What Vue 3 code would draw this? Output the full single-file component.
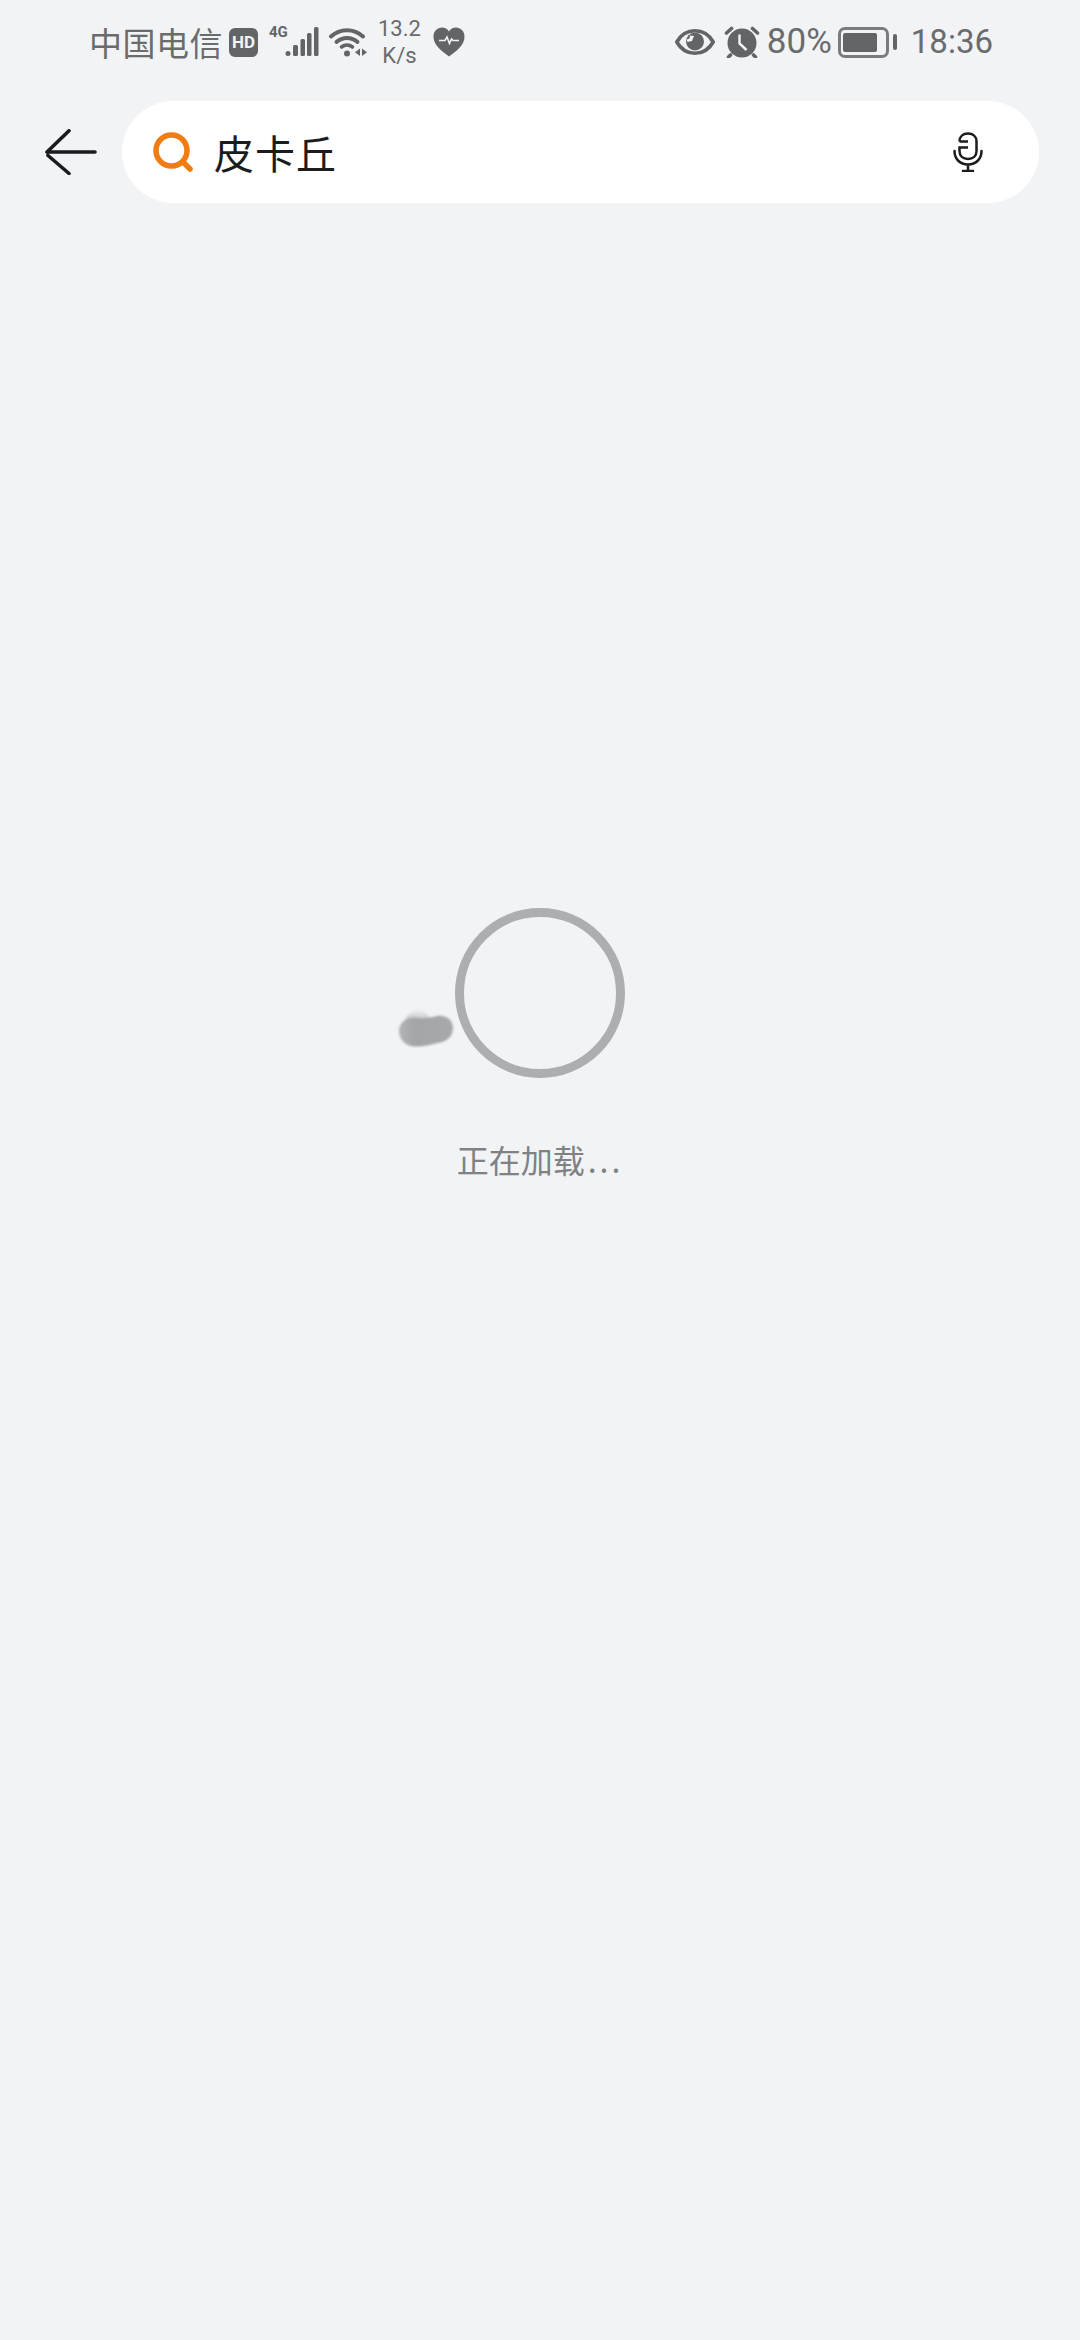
<template>
  <div class="page">
    <div class="status-bar">
      <div class="status-left">
        <span class="carrier">中国电信</span>
        <span class="hd">HD</span>
        <div class="signal">
          <span class="net">4G</span>
          <svg width="34" height="30" viewBox="0 0 34 30">
            <circle cx="3" cy="26.500" r="2.500" fill="#636466" />
            <rect x="8" y="18" width="5" height="11" rx="1.500" fill="#636466" />
            <rect x="15.500" y="12" width="4.500" height="17" rx="1.500" fill="#636466" />
            <rect x="22" y="6" width="4.500" height="23" rx="1.500" fill="#636466" />
            <rect x="29" y="0" width="4.500" height="29" rx="1.500" fill="#636466" />
          </svg>
        </div>
        <svg class="wifi" width="38" height="32" viewBox="0 0 38 32" fill="none">
          <path d="M2 10.500C11 2 25 2 34 10.500" stroke="#636466" stroke-width="4" stroke-linecap="round" />
          <path d="M7.500 16C13.500 10.600 22.500 10.600 28.500 16" stroke="#636466" stroke-width="4" stroke-linecap="round" />
          <path d="M12.500 21C15.800 18.400 20.200 18.400 23.500 21" stroke="#636466" stroke-width="3.600" stroke-linecap="round" />
          <circle cx="18" cy="27.500" r="3" fill="#636466" />
          <path d="M31 22.500V30L26 26.200Z" fill="#636466" />
          <path d="M33 22.500V30L38 26.200Z" fill="#636466" />
        </svg>
        <div class="speed">
          <span>13.2</span>
          <span>K/s</span>
        </div>
        <svg class="heart" width="32" height="30" viewBox="0 0 32 30">
          <path d="M16 29.500C7 23 0.500 17.500 0.500 9.500C0.500 4 4.500 0.500 9 0.500C12 0.500 14.500 2 16 4.500C17.500 2 20 0.500 23 0.500C27.500 0.500 31.500 4 31.500 9.500C31.500 17.500 25 23 16 29.500Z" fill="#636466" />
          <path d="M6 13.500H12L14 10L16.500 16.500L18.500 12L20 13.500H26" fill="none" stroke="#f1f3f5" stroke-width="1.600" />
        </svg>
      </div>
      <div class="status-right">
        <svg class="eye" width="40" height="26" viewBox="0 0 40 26">
          <path d="M1.800 13C6 5.500 12.500 1.800 20 1.800C27.500 1.800 34 5.500 38.200 13C34 20.500 27.500 24.200 20 24.200C12.500 24.200 6 20.500 1.800 13Z" fill="none" stroke="#636466" stroke-width="3.600" />
          <circle cx="20" cy="12.500" r="9" fill="#636466" />
          <path d="M11.500 10.500C13.500 10.500 15 9.500 15 6.500L19 7L17 12L12.500 13Z" fill="#f1f3f5" />
        </svg>
        <svg class="alarm" width="36" height="32" viewBox="0 0 36 32">
          <circle cx="18" cy="17" r="14.500" fill="#636466" />
          <path d="M2.500 7L7.500 2.500M33.500 7L28.500 2.500M6.500 29L4.500 31M29.500 29L31.500 31" stroke="#636466" stroke-width="3.600" stroke-linecap="round" />
          <path d="M15.500 8.500V17.500L22.500 24" fill="none" stroke="#f1f3f5" stroke-width="2.400" />
        </svg>
        <span class="percent">80%</span>
        <div class="battery">
          <div class="battery-body">
            <div class="battery-fill"></div>
          </div>
          <div class="battery-nub"></div>
        </div>
        <span class="time">18:36</span>
      </div>
    </div>

    <div class="search-row">
      <svg class="back" width="52" height="46" viewBox="0 0 52 46" fill="none">
        <path d="M2 23H50M24 1.800L2 23M3 26.500L24 44.500" stroke="#1c1c1e" stroke-width="3.600" stroke-linecap="round" />
      </svg>
      <div class="search-box">
        <svg class="search-icon" width="40" height="40" viewBox="0 0 40 40" fill="none">
          <circle cx="18.500" cy="18.500" r="15.500" stroke="#f07c12" stroke-width="5.500" />
          <path d="M30 30L37 37" stroke="#f07c12" stroke-width="5.500" stroke-linecap="round" />
        </svg>
        <span class="query">皮卡丘</span>
        <svg class="mic" width="30" height="40" viewBox="0 0 30 40" fill="none">
          <path d="M6.500 9.500C6.500 4.500 10 1.500 15 1.500C20 1.500 23.500 4.500 23.500 9.500V19C23.500 24 20 27 15 27C10 27 6.500 24 6.500 19V15.500H15M6.500 9.500H15" stroke="#1c1c1e" stroke-width="2.500" />
          <path d="M1.500 19C1.500 27 7 32.500 15 32.500C23 32.500 28.500 27 28.500 19M15 32.500V39M10 39H20" stroke="#1c1c1e" stroke-width="2.500" stroke-linecap="round" />
        </svg>
      </div>
    </div>

    <div class="loading">
      <div class="spinner">
        <svg class="blob" width="56" height="42" viewBox="0 0 56 42">
          <defs>
            <linearGradient id="blobFade" x1="0" y1="0" x2="1" y2="0">
              <stop offset="0" stop-color="#b4b5b6" />
              <stop offset="0.3" stop-color="#a4a5a6" />
              <stop offset="1" stop-color="#a8a9aa" />
            </linearGradient>
            <linearGradient id="blobTop" x1="0" y1="1" x2="0" y2="0">
              <stop offset="0" stop-color="#a5a6a7" stop-opacity="0.9" />
              <stop offset="1" stop-color="#a5a6a7" stop-opacity="0" />
            </linearGradient>
          </defs>
          <path d="M5 20C7 10 13 4 20 3C26 4 30 9 33 14L20 20Z" fill="url(#blobTop)" />
          <path d="M1 25C1 16 9 11 17 11.500C24 13 30 12 39 10C48 9 55 14 55 22C55 31 48 36 40 37C32 39 24 41 16 40.500C8 40 1 34 1 25Z" fill="url(#blobFade)" />
        </svg>
      </div>
      <span class="loading-text">正在加载<span class="dots">...</span></span>
    </div>
  </div>
</template>

<script setup>
</script>

<style>
html,
body {
  margin: 0;
  background: #f1f3f5;
}
</style>

<style scoped>
.page {
  min-height: 2340px;
  background: #f1f3f5;
  font-family: "Noto Sans CJK SC", "Noto Sans", sans-serif;
  overflow: hidden;
}

.status-bar {
  display: flex;
  justify-content: space-between;
  align-items: center;
  height: 84px;
  padding: 0 87px 0 89px;
  color: #636466;
}

.status-left,
.status-right {
  display: flex;
  align-items: center;
}

.carrier {
  font-size: 33px;
  letter-spacing: 0.5px;
  line-height: 44px;
  color: #6a6b6d;
}

.hd {
  width: 29px;
  height: 29px;
  margin-left: 6px;
  border-radius: 6px;
  background: #636466;
  color: #f1f3f5;
  font: 700 17px/29px "Roboto", sans-serif;
  text-align: center;
}

.signal {
  position: relative;
  width: 50px;
  height: 32px;
  margin-left: 11px;
}

.signal svg {
  position: absolute;
  right: 0;
  top: 1px;
}

.net {
  position: absolute;
  left: 0;
  top: -3px;
  font: 700 15px/18px "Roboto", sans-serif;
}

.wifi {
  margin-left: 10px;
}

.speed {
  display: flex;
  flex-direction: column;
  align-items: center;
  margin-left: 11px;
  color: #6a6b6d;
  font: 400 22px/27px "Roboto", sans-serif;
}

.heart {
  margin-left: 12px;
}

.alarm {
  margin-left: 9px;
}

.percent {
  margin-left: 7px;
  color: #6a6b6d;
  font: 400 35px/44px "Roboto", sans-serif;
}

.battery {
  display: flex;
  align-items: center;
  margin-left: 6px;
}

.battery-body {
  box-sizing: border-box;
  width: 51px;
  height: 31px;
  padding: 3px 2px;
  border: 3px solid #7a7b7d;
  border-radius: 7px;
}

.battery-fill {
  width: 34px;
  height: 100%;
  border-radius: 2px;
  background: #636466;
}

.battery-nub {
  width: 4px;
  height: 16px;
  margin-left: 4px;
  border-radius: 2px;
  background: #636466;
}

.time {
  margin-left: 14px;
  color: #6a6b6d;
  font: 400 33px/44px "Roboto", sans-serif;
}

.search-row {
  display: flex;
  align-items: center;
  margin-top: 17px;
  padding: 0 41px 0 45px;
}

.back {
  flex: none;
}

.search-box {
  flex: 1;
  display: flex;
  align-items: center;
  height: 102px;
  margin-left: 25px;
  padding: 0 56px 0 31px;
  border-radius: 51px;
  background: #ffffff;
}

.query {
  flex: 1;
  margin-left: 21px;
  color: #1c1c1e;
  font-size: 40px;
  letter-spacing: 1px;
  line-height: 52px;
}

.loading {
  display: flex;
  flex-direction: column;
  align-items: center;
  padding-top: 705px;
}

.spinner {
  position: relative;
  box-sizing: border-box;
  width: 170px;
  height: 170px;
  border: 9px solid #adaeaf;
  border-radius: 50%;
}

.blob {
  position: absolute;
  left: -66px;
  top: 89px;
  filter: blur(0.8px);
}

.loading-text {
  margin-top: 59px;
  color: #808183;
  font-size: 32px;
  line-height: 44px;
}

.dots {
  margin-left: 3px;
  letter-spacing: 3px;
}
</style>
